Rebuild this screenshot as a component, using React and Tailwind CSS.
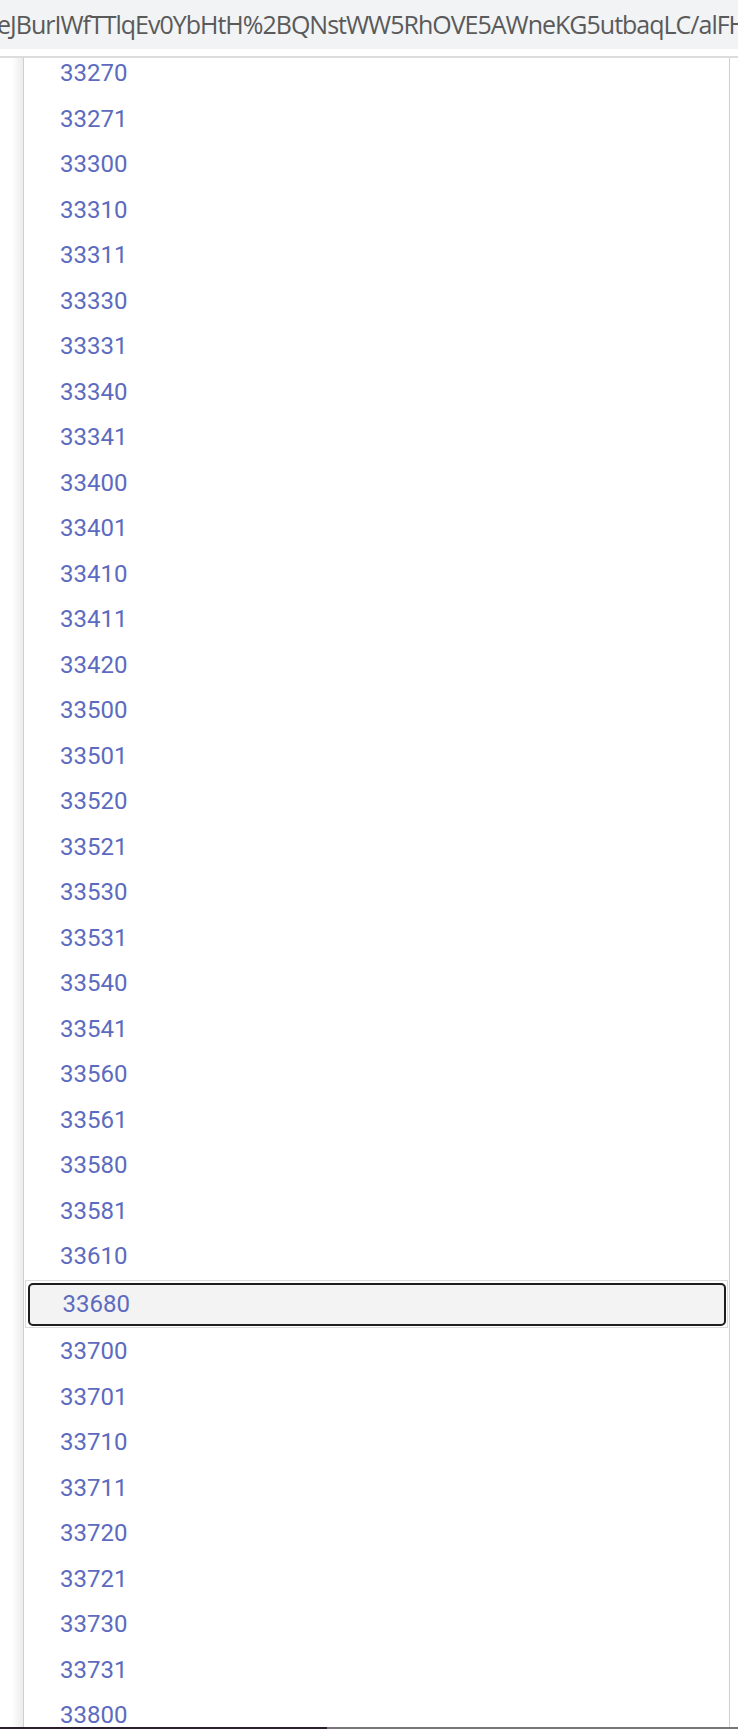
import React from 'react';

const before = [
    '33270', '33271', '33300', '33310', '33311', '33330', '33331', '33340', '33341',
    '33400', '33401', '33410', '33411', '33420', '33500', '33501', '33520', '33521',
    '33530', '33531', '33540', '33541', '33560', '33561', '33580', '33581', '33610',
];
const selected = '33680';
const after = ['33700', '33701', '33710', '33711', '33720', '33721', '33730', '33731', '33800', '33801'];

const rowText = "text-[24px] text-[#5c6bc0] leading-none";

const Row = ({ code }) => (
    <div className="h-[45.5px] flex-shrink-0 flex items-center pl-[36px]">
        <span className={rowText}>{code}</span>
    </div>
);

export default function App() {
    return (
        <div className="h-[1729px] w-[738px] flex flex-col bg-white overflow-hidden" style={{ fontFamily: 'Roboto, "Liberation Sans", sans-serif' }}>

            {/* Address bar strip */}
            <div className="h-[49px] flex-shrink-0 bg-[#f1f3f4] flex items-center overflow-hidden">
                <span
                    className="whitespace-nowrap text-[25px] text-[#5a5a5a] -ml-[3px] tracking-[-1px]"
                    style={{ fontFamily: '"Open Sans", "Noto Sans", sans-serif' }}
                >
                    eJBurIWfTTlqEv0YbHtH%2BQNstWW5RhOVE5AWneKG5utbaqLC/alFH
                </span>
            </div>
            <div className="h-[7px] flex-shrink-0 bg-white"></div>
            <div className="h-[2px] flex-shrink-0 bg-[#dcdcdc]"></div>

            {/* List area */}
            <div className="flex-1 flex min-h-0">
                <div className="w-[23px] flex-shrink-0 bg-gradient-to-r from-white via-white to-[#ececec]"></div>

                <div className="flex-1 min-w-0 border-x border-[#cfcfcf] overflow-hidden bg-white">
                    <div className="flex flex-col -mt-[7.4px]">
                        {before.map((c) => <Row key={c} code={c} />)}

                        {/* Focused option */}
                        <div className="h-[49.5px] flex-shrink-0 pt-[1px] px-[1px]">
                            <div className="h-[48px] border border-[#dcdcdc] p-[1.5px]">
                                <div className="h-full border-2 border-[#1e1e1e] rounded-[5px] bg-[#f3f3f3] flex items-center pl-[33px]">
                                    <span className={rowText}>{selected}</span>
                                </div>
                            </div>
                        </div>

                        {after.map((c) => <Row key={c} code={c} />)}
                    </div>
                </div>

                <div className="w-[8px] flex-shrink-0 bg-white"></div>
            </div>

            {/* bottom edge */}
            <div className="h-[2px] flex-shrink-0 flex">
                <div className="w-[327px] bg-[#2b1d2e]"></div>
                <div className="flex-1 bg-[#777777]"></div>
            </div>
        </div>
    );
}
